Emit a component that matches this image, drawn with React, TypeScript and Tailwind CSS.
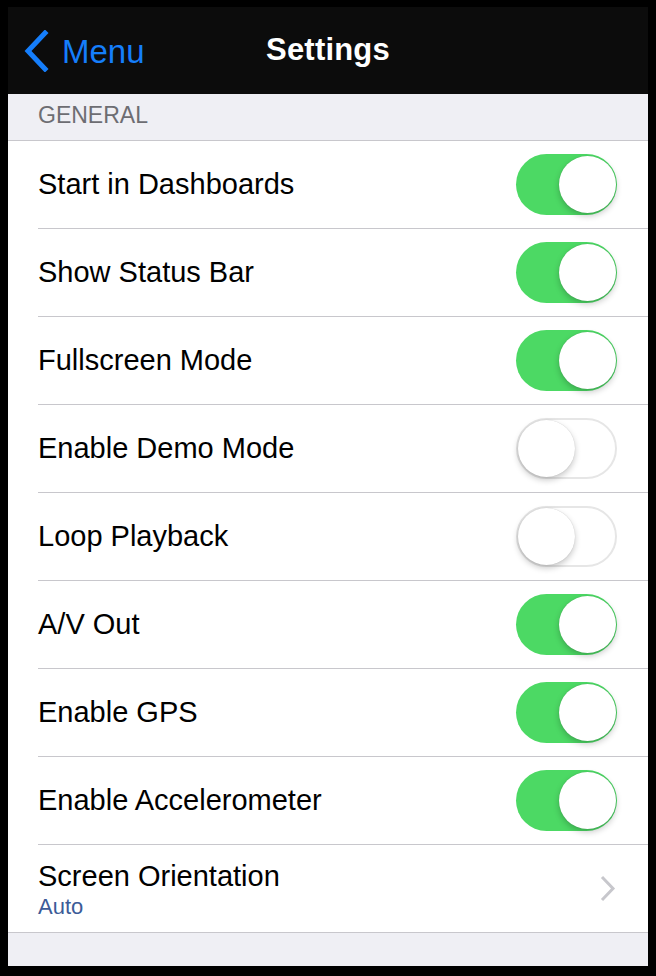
import React from 'react';

const settings = [
    { id: 'dashboards', label: 'Start in Dashboards', on: true },
    { id: 'statusbar', label: 'Show Status Bar', on: true },
    { id: 'fullscreen', label: 'Fullscreen Mode', on: true },
    { id: 'demo', label: 'Enable Demo Mode', on: false },
    { id: 'loop', label: 'Loop Playback', on: false },
    { id: 'av', label: 'A/V Out', on: true },
    { id: 'gps', label: 'Enable GPS', on: true },
    { id: 'accel', label: 'Enable Accelerometer', on: true },
];

const Toggle: React.FC<{ on: boolean }> = ({ on }) => (
    <div
        className={`relative w-[101px] h-[61px] rounded-full flex-shrink-0 ${on
                ? 'bg-[#4cd964]'
                : 'bg-white border-2 border-[#e6e6e6]'
            }`}
    >
        <div
            className={`absolute w-[57px] h-[57px] rounded-full bg-white shadow-[0_3px_6px_rgba(0,0,0,0.22),0_0_1px_rgba(0,0,0,0.2)] ${on ? 'right-[1px] top-[2px]' : 'left-[0px] top-[0px]'
                }`}
        ></div>
    </div>
);

export default function App() {
    return (
        <div
            className="w-[656px] h-[976px] bg-black pt-[7px] px-[8px] pb-[10px]"
            style={{ fontFamily: '"Liberation Sans", Arial, sans-serif' }}
        >
            <div className="w-full h-full bg-[#efeff4] flex flex-col">
                {/* nav bar */}
                <div className="relative h-[87px] bg-[#0c0c0c] flex items-center justify-center">
                    <div className="absolute left-[16px] top-[23px] flex items-center gap-[12px]">
                        <svg width="26" height="42" viewBox="0 0 26 42" fill="none" stroke="#157efb" strokeWidth="5" strokeLinecap="square">
                            <polyline points="21 3 4 21 21 39"></polyline>
                        </svg>
                        <span className="text-[33px] text-[#157efb] leading-none">Menu</span>
                    </div>
                    <span className="text-[31px] font-bold text-white leading-none -mt-[2px] tracking-[0.2px]">Settings</span>
                </div>

                {/* section header */}
                <div className="h-[47px] border-b border-[#c8c7cc] flex items-end pl-[30px] pb-[13px]">
                    <span className="text-[23px] text-[#6d6d72] leading-none">GENERAL</span>
                </div>

                <div className="bg-white border-b border-[#c8c7cc]">
                    {settings.map((s) => (
                        <div key={s.id} className="pl-[30px]">
                            <div className="h-[88px] border-b border-[#c8c7cc] flex items-center justify-between pr-[31px]">
                                <span className="text-[29px] text-black leading-none">{s.label}</span>
                                <Toggle on={s.on} />
                            </div>
                        </div>
                    ))}

                    <div className="h-[87px] pl-[30px] pr-[32px] flex items-center justify-between">
                        <div className="flex flex-col gap-[5px] mt-[2px]">
                            <span className="text-[29px] text-black leading-none">Screen Orientation</span>
                            <span className="text-[22px] text-[#3c5b98] leading-none">Auto</span>
                        </div>
                        <svg width="16" height="27" viewBox="0 0 16 27" fill="none" stroke="#c7c7cc" strokeWidth="3">
                            <polyline points="2 2 13 13.5 2 25"></polyline>
                        </svg>
                    </div>
                </div>
            </div>
        </div>
    );
}
